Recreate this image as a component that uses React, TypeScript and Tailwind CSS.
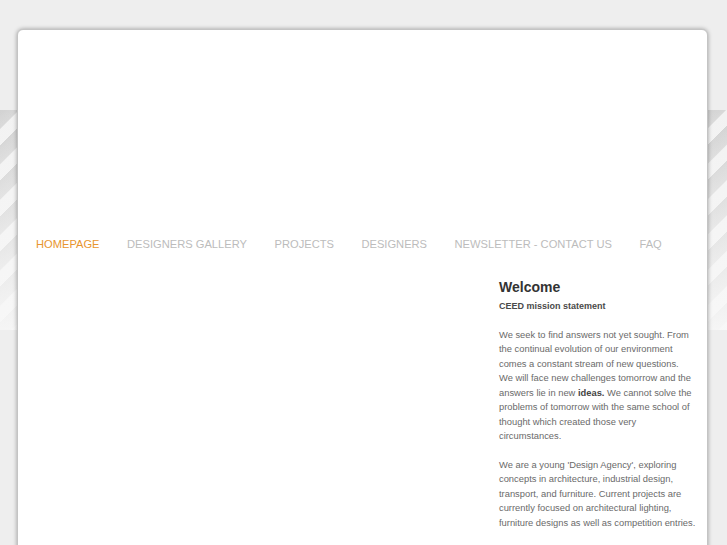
import React from "react";

const navItems = [
  "HOMEPAGE",
  "DESIGNERS GALLERY",
  "PROJECTS",
  "DESIGNERS",
  "NEWSLETTER - CONTACT US",
  "FAQ",
];

export default function App() {
  return (
    <div
      className="relative h-[545px] w-full overflow-hidden bg-[#eeeeee]"
      style={{ fontFamily: '"Liberation Sans", Arial, sans-serif' }}
    >
      <div className="absolute left-0 right-0 top-[110px] h-[220px] [background-image:linear-gradient(to_bottom,rgba(248,248,248,0)_0%,rgba(248,248,248,0.5)_55%,rgba(248,248,248,0.92)_100%),repeating-linear-gradient(135deg,#d2d2d2_0px,#d8d8d8_13px,#f2f2f2_14px,#f2f2f2_25px)]" />
      <div className="relative ml-[17px] mr-[19px] mt-[29px] h-[600px] rounded-[6px] border border-[#c4c4c4] bg-white shadow-[0_0_4px_rgba(0,0,0,0.35)]">
        <div className="h-[199px]" />
        <nav className="flex h-[30px] items-center gap-[27.5px] pl-[18px] text-[11.15px]">
          {navItems.map((item, i) => (
            <span
              key={item}
              className={i === 0 ? "text-[#e8952f]" : "text-[#bcbcbc]"}
            >
              {item}
            </span>
          ))}
        </nav>
        <div className="flex pt-[18px]">
          <div className="flex-1" />
          <div className="w-[208px] pr-[8px]">
            <h1 className="h-[20px] text-[14px] font-bold leading-[20px] text-[#333333]">
              Welcome
            </h1>
            <div className="mt-[2px] whitespace-nowrap text-[9.35px] leading-[14.45px] text-[#6a6a6a]">
              <p className="text-[9px] font-bold text-[#4a4a4a]">
                CEED mission statement
              </p>
              <br />
              <p>
                We seek to find answers not yet sought. From
                <br />
                the continual evolution of our environment
                <br />
                comes a constant stream of new questions.
                <br />
                We will face new challenges tomorrow and the
                <br />
                answers lie in new <b className="text-[#444444]">ideas.</b> We
                cannot solve the
                <br />
                problems of tomorrow with the same school of
                <br />
                thought which created those very
                <br />
                circumstances.
              </p>
              <br />
              <p>
                We are a young 'Design Agency', exploring
                <br />
                concepts in architecture, industrial design,
                <br />
                transport, and furniture. Current projects are
                <br />
                currently focused on architectural lighting,
                <br />
                furniture designs as well as competition entries.
              </p>
            </div>
          </div>
        </div>
      </div>
    </div>
  );
}
